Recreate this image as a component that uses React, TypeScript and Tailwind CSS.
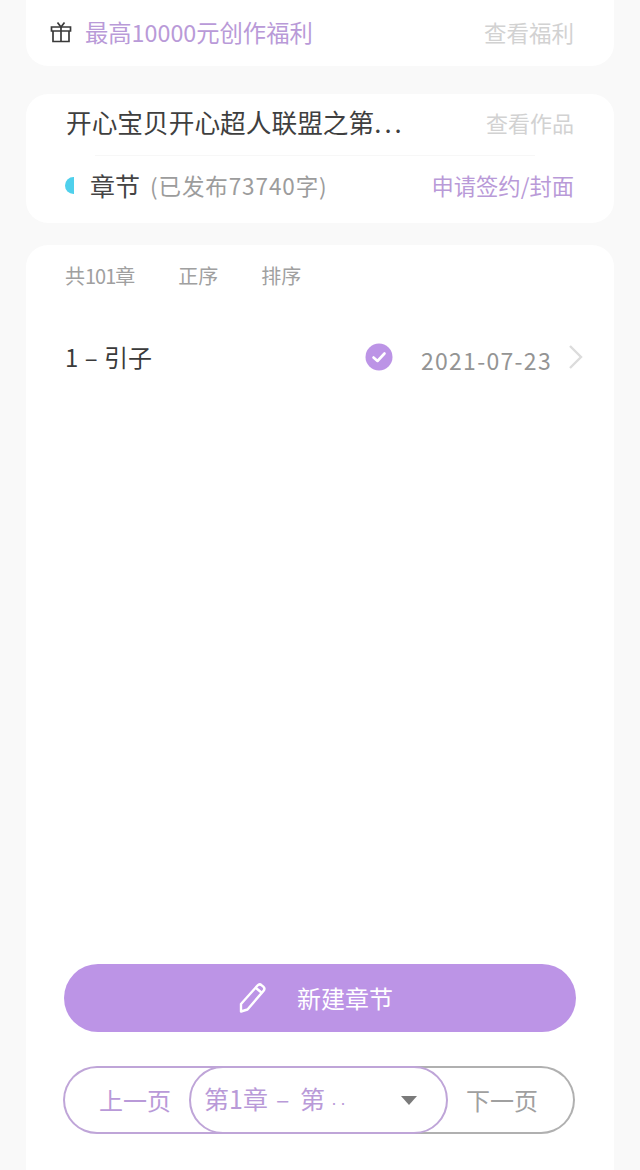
const font = "font-['Noto_Sans_CJK_SC','Noto_Sans',sans-serif]";

function GiftIcon() {
  return (
    <svg width="22" height="22" viewBox="0 0 22 22" fill="none" stroke="#3a3a3a" strokeWidth="1.7" className="shrink-0">
      <path d="M1.500 6h19v4h-19z" />
      <path d="M3 10v10.500h16V10" />
      <path d="M11 6v14.500" />
      <path d="M7.500 1.500 11 6l3.500-4.500" />
    </svg>
  );
}

function PencilIcon() {
  return (
    <svg width="28" height="32" viewBox="0 0 28 32" fill="none" stroke="#fff" strokeWidth="2.4" strokeLinejoin="round">
      <path d="M2 29.500V22L18.500 3.500a3 3 0 0 1 4.200-.2l1.600 1.400a3 3 0 0 1 .2 4.200L8.500 27.500z" />
      <path d="M17 6l6 5" />
    </svg>
  );
}

function CheckBadge() {
  return (
    <svg width="28" height="28" viewBox="0 0 28 28" className="shrink-0">
      <circle cx="14" cy="14" r="13.500" fill="#bc94e6" />
      <path d="M8.500 14.500l4 3.500 7-7.500" fill="none" stroke="#fff" strokeWidth="2.600" strokeLinecap="round" strokeLinejoin="round" />
    </svg>
  );
}

function Chevron() {
  return (
    <svg width="16" height="26" viewBox="0 0 16 26" fill="none" stroke="#dcdcdc" strokeWidth="2.400" className="shrink-0">
      <path d="M2 2l11 11L2 24" />
    </svg>
  );
}

export default function App() {
  return (
    <div className={`h-[1170px] w-[640px] overflow-hidden bg-[#f9f9f9] px-[26px] ${font}`}>
      <div className="flex h-[66px] items-center justify-between rounded-b-[22px] bg-white pb-[2px] pl-[24px] pr-[40px]">
        <div className="flex items-center gap-[13px]">
          <GiftIcon />
          <span className="text-[23.300px] leading-[32px] text-[#b99ad8]">最高10000元创作福利</span>
        </div>
        <span className="text-[22.500px] leading-[32px] text-[#d2d2d2]">查看福利</span>
      </div>

      <div className="mt-[28px] h-[129px] rounded-[22px] bg-white px-[40px]">
        <div className="flex h-[61px] items-center justify-between pb-[5px]">
          <span className="text-[25.700px] leading-[36px] text-[#3f3f3f]">
            开心宝贝开心超人联盟之第<span className="tracking-[3px]">...</span>
          </span>
          <span className="text-[22px] leading-[32px] text-[#d2d2d2]">查看作品</span>
        </div>
        <div className="ml-[29px] mr-[39px] h-px bg-[#f7f7f7]" />
        <div className="flex h-[62px] items-center justify-between pb-[4px]">
          <div className="flex items-center">
            <span className="-ml-[1px] h-[17px] w-[9px] rounded-l-full bg-[#4fd0ec]" />
            <span className="ml-[16px] text-[25px] leading-[36px] text-[#444444]">章节</span>
            <span className="ml-[10px] text-[22.500px] leading-[32px] tracking-[0.9px] text-[#9c9c9c]">(已发布73740字)</span>
          </div>
          <span className="text-[22.300px] leading-[32px] text-[#b99ad8]">申请签约/封面</span>
        </div>
      </div>

      <div className="mt-[22px] h-[925px] rounded-t-[22px] bg-white pt-[17px]">
        <div className="flex gap-[43px] pl-[39px] text-[20px] leading-[28px] text-[#a0a0a0]">
          <span>
            共<span className="tracking-[-1px]">101</span>章
          </span>
          <span>正序</span>
          <span>排序</span>
        </div>
        <div className="mt-[39px] flex h-[56px] items-center pl-[39px] pr-[30px]">
          <span className="flex-1 text-[24px] leading-[36px] text-[#3a3a3a]">
            <span className="tracking-[0.500px]">1 – </span>引子
          </span>
          <CheckBadge />
          <span className="ml-[28px] mt-[6px] text-[23px] leading-[32px] tracking-[1.300px] text-[#949494]">2021-07-23</span>
          <span className="ml-[16px] flex">
            <Chevron />
          </span>
        </div>

        <button className="ml-[38px] mt-[579px] flex h-[68px] w-[512px] items-center justify-center rounded-full bg-[#bc94e6] pr-[8px]">
          <PencilIcon />
          <span className="ml-[30px] text-[24px] leading-[34px] text-white">新建章节</span>
        </button>

        <div className="ml-[37px] mt-[34px] flex h-[68px] w-[512px]">
          <div className="flex w-[190px] items-center rounded-l-full border-y-[2px] border-l-[2px] border-[#bfa5d8] pl-[34px] text-[24px] leading-[34px] text-[#b99ad8]">
            上一页
          </div>
          <div className="z-10 -ml-[64px] flex w-[259px] items-center rounded-full border-[2px] border-[#bfa5d8] bg-white pl-[13px] pr-[29px] text-[#b99ad8]">
            <span className="flex-1 text-[25px] leading-[36px]">
              第1章<span className="tracking-[2.500px]"> – </span>第
              <span className="ml-[6px] font-['Liberation_Sans',sans-serif] text-[18px] tracking-[3px]">··</span>
            </span>
            <span className="h-0 w-0 border-x-[8px] border-t-[9px] border-x-transparent border-t-[#7a7a7a]" />
          </div>
          <div className="-ml-[64px] flex flex-1 items-center justify-end rounded-r-full border-y-[2px] border-r-[2px] border-[#b0b0b0] pr-[35px] text-[24px] leading-[34px] text-[#a0a0a0]">
            下一页
          </div>
        </div>
      </div>
    </div>
  );
}
